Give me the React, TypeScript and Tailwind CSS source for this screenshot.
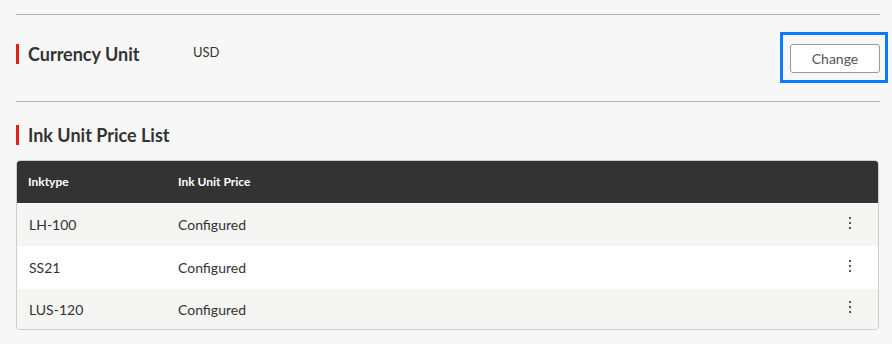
import React from "react";

const rows = [
  { type: "LH-100", price: "Configured", bg: "bg-[#f5f5f4]" },
  { type: "SS21", price: "Configured", bg: "bg-white" },
  { type: "LUS-120", price: "Configured", bg: "bg-[#f5f5f4]" },
];

function Kebab() {
  return (
    <svg width="4" height="14" viewBox="0 0 4 14" className="block">
      <rect x="1" y="1" width="2" height="2" fill="#555" />
      <rect x="1" y="6" width="2" height="2" fill="#555" />
      <rect x="1" y="11" width="2" height="2" fill="#555" />
    </svg>
  );
}

export default function App() {
  return (
    <div
      className="w-[892px] h-[344px] bg-[#f7f7f7] pl-4 pr-3 pt-[14px] text-[#333]"
      style={{ fontFamily: "Lato, 'Liberation Sans', sans-serif" }}
    >
      <div className="border-t border-[#b3b3b3]" />
      <div className="flex items-start h-[86px]">
        <div className="flex items-center mt-[29px] h-5">
          <div className="w-[3px] h-5 bg-[#e0201a]" />
          <div className="ml-[9px] w-[165px] text-[18px] font-bold leading-none">Currency Unit</div>
          <div className="text-[13px] mb-[3px]">USD</div>
        </div>
        <div className="ml-auto mr-[-8px] mt-[17px] border-[3px] border-[#0a7aff] pt-[9px] pb-[7px] pl-[7px] pr-[5px]">
          <button className="block w-[90px] h-[29px] border border-[#999] rounded-[3px] bg-white text-[14px] text-[#555]">
            Change
          </button>
        </div>
      </div>
      <div className="border-t border-[#b3b3b3]" />
      <div className="flex items-center mt-[23px] h-5">
        <div className="w-[3px] h-5 bg-[#e0201a]" />
        <div className="ml-[9px] text-[18px] font-bold leading-none">Ink Unit Price List</div>
      </div>
      <div className="mt-[15px] w-[863px] rounded-[4px] border border-[#cdcdcd] overflow-hidden">
        <div className="flex items-center h-[43px] bg-[#333] text-white text-[12px] font-bold -mx-px -mt-px">
          <div className="pl-[12px] w-[162px]">Inktype</div>
          <div>Ink Unit Price</div>
        </div>
        {rows.map((r, i) => (
          <div key={i} className={`flex items-center ${i === 2 ? "h-[40px]" : "h-[43px]"} ${r.bg} text-[14px]`}>
            <div className="pl-[12px] w-[161px]">{r.type}</div>
            <div>{r.price}</div>
            <div className="ml-auto mr-[26px] mb-[4px]">
              <Kebab />
            </div>
          </div>
        ))}
      </div>
    </div>
  );
}
